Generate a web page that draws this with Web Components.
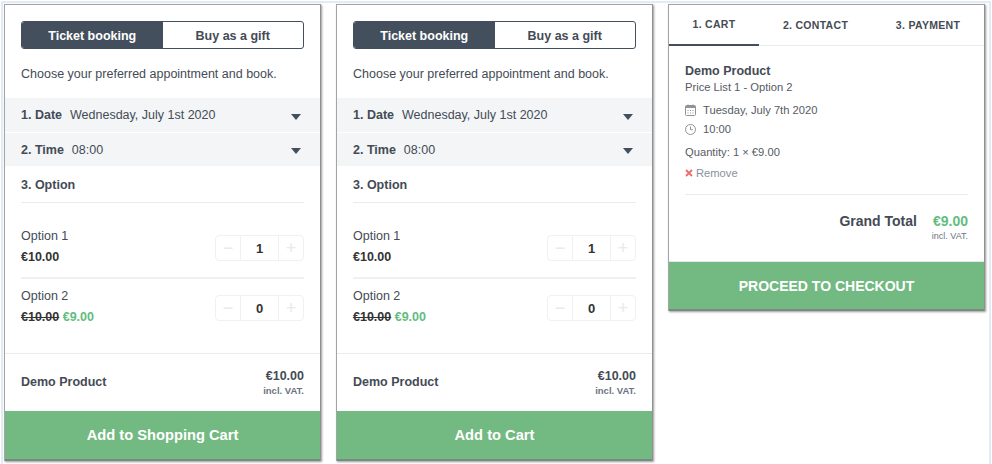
<!DOCTYPE html>
<html>
<head>
<meta charset="utf-8">
<style>
html, body { margin: 0; height: 100%; background: #fff; overflow: hidden; }
body { font-family: "Liberation Sans", Arial, sans-serif; color: #444b55; }
</style>
</head>
<body>
<booking-page>
  <booking-card action="Add to Shopping Cart"></booking-card>
  <booking-card action="Add to Cart"></booking-card>
  <cart-card></cart-card>
</booking-page>

<template id="t-page">
  <style>
    :host { display: flex; align-items: flex-start; gap: 15px; box-sizing: border-box; width: 990px; height: 463px; margin: 1px 1px 0; padding: 1px 0 0 1px; border: 2px solid #e3ecf5; border-bottom: 0; }
  </style>
  <slot></slot>
</template>

<template id="t-booking">
  <style>
    :host { display: block; width: 317px; height: 457px; box-sizing: border-box; background: #fff; border: 1px solid #a4a4a4; border-right: 1px solid #8f8f8f; border-bottom: 0; box-shadow: 1px 1px 2px #999; }
    .wrap { display: flex; flex-direction: column; height: 100%; }
    .tabs { display: flex; margin: 16px 16px 0; height: 28px; box-sizing: border-box; border: 1.5px solid #444f5e; border-radius: 3px; font-size: 12.5px; font-weight: bold; overflow: hidden; }
    .tabs div { flex: 1; display: flex; align-items: center; justify-content: center; padding-top: 1px; }
    .tabs .on { background: #444f5e; color: #fff; }
    .tabs .off { color: #444b55; }
    .intro { margin: 17px 16px 0; font-size: 12.5px; line-height: 16px; height: 32px; }
    step-row + step-row { margin-top: 1px; }
    .third { margin: 0 16px; height: 37px; box-sizing: border-box; border-bottom: 1px solid #e9ebee; padding-top: 11px; font-size: 12.5px; font-weight: bold; line-height: 16px; }
    .opts { flex: 1; margin: 0 16px; padding-top: 23px; }
    .foot { border-top: 1px solid #e9ebee; margin-top: auto; height: 58px; flex: none; box-sizing: border-box; padding: 0 16px; display: flex; align-items: center; justify-content: space-between; }
    .foot b { font-size: 12.5px; margin-top: -1px; }
    .price { text-align: right; font-weight: bold; font-size: 12.5px; line-height: 16px; margin-top: -1px; }
    .price small { display: block; font-size: 9.5px; color: #6c7480; line-height: 13px; }
    .cta { background: #73b982; color: #fff; height: 50px; flex: none; font-weight: bold; font-size: 14.7px; display: flex; align-items: center; justify-content: center; border-bottom: 2px solid #7a8a7e; box-sizing: border-box; }
  </style>
  <div class="wrap">
    <div class="tabs"><div class="on">Ticket booking</div><div class="off">Buy as a gift</div></div>
    <div class="intro">Choose your preferred appointment and book.</div>
    <step-row label="1. Date" value="Wednesday, July 1st 2020"></step-row>
    <step-row label="2. Time" value="08:00" style="height:33px"></step-row>
    <div class="third">3. Option</div>
    <div class="opts">
      <option-row name="Option 1" qty="1"><b>€10.00</b></option-row>
      <option-row name="Option 2" qty="0" last><b><s>€10.00</s> <span style="color:#62bd7e">€9.00</span></b></option-row>
    </div>
    <div class="foot"><b>Demo Product</b><div class="price">€10.00<small>incl. VAT.</small></div></div>
    <div class="cta"></div>
  </div>
</template>

<template id="t-step">
  <style>
    :host { display: flex; align-items: center; height: 34px; box-sizing: border-box; padding: 0 19px 0 16px; background: #f3f5f7; font-size: 12.5px; }
    b { margin-right: 8px; }
    .v { flex: 1; }
    svg { display: block; margin-top: 3px; }
  </style>
  <b></b><span class="v"></span>
  <svg width="10" height="6" viewBox="0 0 10 6"><path d="M0 0h10L5 6z" fill="#444f5e"/></svg>
</template>

<template id="t-option">
  <style>
    :host { display: flex; justify-content: space-between; align-items: flex-start; height: 53px; box-sizing: border-box; font-size: 12.5px; border-bottom: 2px solid #eef0f2; margin-bottom: 7px; }
    :host([last]) { border-bottom: 0; }
    .name { line-height: 20px; }
    .p { line-height: 20px; color: #333; margin-top: 1px; }
    num-stepper { margin-top: 9px; }
    ::slotted(b) { font-weight: bold; }
  </style>
  <div><div class="name"></div><div class="p"><slot></slot></div></div>
  <num-stepper></num-stepper>
</template>

<template id="t-stepper">
  <style>
    :host { display: flex; width: 89px; height: 26px; box-sizing: border-box; border: 1.5px solid #eff1f3; border-radius: 4px; font-size: 13px; font-weight: bold; color: #333; }
    div { display: flex; align-items: center; justify-content: center; }
    .b { width: 24px; color: #e8eaec; font-weight: normal; font-size: 18px; }
    .n { flex: 1; border-left: 1.5px solid #eff1f3; border-right: 1.5px solid #eff1f3; }
  </style>
  <div class="b">−</div><div class="n"></div><div class="b">+</div>
</template>

<template id="t-cart">
  <style>
    :host { display: block; width: 317px; height: 307px; box-sizing: border-box; background: #fff; border: 1px solid #a4a4a4; border-right-color: #8f8f8f; border-bottom: 0; box-shadow: 1px 1px 2px #999; color: #555b63; font-size: 11.2px; }
    .wrap { display: flex; flex-direction: column; height: 100%; }
    .nav { display: flex; height: 40px; flex: none; border-bottom: 1px solid #e9ebee; font-size: 10.5px; font-weight: bold; letter-spacing: .3px; color: #444b55; }
    .nav div { display: flex; align-items: center; justify-content: center; height: 40px; box-sizing: border-box; padding-bottom: 1px; }
    .nav .a { width: 90px; border-bottom: 2px solid #444f5e; height: 41px; }
    .nav .c { width: 113px; }
    .nav .d { width: 112px; }
    .body { flex: 1; padding: 18px 16px 0; }
    h3 { margin: 0; font-size: 12.5px; color: #444b55; line-height: 15px; }
    .sub { line-height: 16px; }
    .ic { display: flex; align-items: center; gap: 7px; line-height: 18px; }
    .ic + .ic { margin-top: 1px; }
    .ic svg { flex: none; }
    .q { margin-top: 5px; line-height: 18px; }
    .rm { margin-top: 3px; line-height: 18px; color: #8a9099; display: flex; align-items: center; gap: 3px; }
    hr { border: 0; border-top: 1px solid #e9ebee; margin: 12px 0 0; }
    .tot { display: flex; justify-content: flex-end; gap: 16px; margin-top: 18px; font-weight: bold; font-size: 14px; line-height: 16px; color: #444b55; }
    .tot span { color: #62bd7e; }
    .vat { text-align: right; font-size: 9px; color: #6c7480; line-height: 13px; margin-top: 1px; }
    .cta { background: #73b982; color: #fff; height: 50px; flex: none; border-top: 1.5px solid #e4e6e8; border-bottom: 2px solid #7a8a7e; box-sizing: border-box; font-weight: bold; font-size: 14px; display: flex; align-items: center; justify-content: center; }
  </style>
  <div class="wrap">
    <div class="nav"><div class="a">1. CART</div><div class="c">2. CONTACT</div><div class="d">3. PAYMENT</div></div>
    <div class="body">
      <h3>Demo Product</h3>
      <div class="sub">Price List 1 - Option 2</div>
      <div class="ic" style="margin-top:6px">
        <svg width="11" height="12" viewBox="0 0 11 12"><rect x=".5" y="1.5" width="10" height="10" rx="1" fill="none" stroke="#8f9499"/><path d="M.5 2h10v2h-10z" fill="#8f9499"/><path d="M3 .5v2M8 .5v2" stroke="#8f9499"/><path d="M2.500 6h1v1h-1zM5 6h1v1H5zM7.500 6h1v1h-1zM2.500 8.500h1v1h-1zM5 8.500h1v1H5zM7.500 8.500h1v1h-1z" fill="#8f9499"/></svg>
        <span>Tuesday, July 7th 2020</span>
      </div>
      <div class="ic">
        <svg width="11" height="11" viewBox="0 0 11 11"><circle cx="5.500" cy="5.500" r="5" fill="none" stroke="#8f9499"/><path d="M5.500 2.500v3.200h2.400" fill="none" stroke="#8f9499"/></svg>
        <span>10:00</span>
      </div>
      <div class="q">Quantity: 1 × €9.00</div>
      <div class="rm"><svg width="8" height="8" viewBox="0 0 8 8"><path d="M1 1l6 6M7 1L1 7" stroke="#ef6a6a" stroke-width="1.800"/></svg>Remove</div>
      <hr>
      <div class="tot">Grand Total <span>€9.00</span></div>
      <div class="vat">incl. VAT.</div>
    </div>
    <div class="cta">PROCEED TO CHECKOUT</div>
  </div>
</template>

<script>
function stamp(el, id) {
  var root = el.attachShadow({ mode: "open" });
  root.appendChild(document.getElementById(id).content.cloneNode(true));
  return root;
}

class BookingPage extends HTMLElement {
  constructor() { super(); stamp(this, "t-page"); }
}

class BookingCard extends HTMLElement {
  constructor() { super(); stamp(this, "t-booking"); }
  connectedCallback() {
    this.shadowRoot.querySelector(".cta").textContent = this.getAttribute("action");
  }
}

class StepRow extends HTMLElement {
  constructor() { super(); stamp(this, "t-step"); }
  connectedCallback() {
    this.shadowRoot.querySelector("b").textContent = this.getAttribute("label");
    this.shadowRoot.querySelector(".v").textContent = this.getAttribute("value");
  }
}

class OptionRow extends HTMLElement {
  constructor() { super(); stamp(this, "t-option"); }
  connectedCallback() {
    this.shadowRoot.querySelector(".name").textContent = this.getAttribute("name");
    this.shadowRoot.querySelector("num-stepper").setAttribute("value", this.getAttribute("qty"));
  }
}

class NumStepper extends HTMLElement {
  static get observedAttributes() { return ["value"]; }
  constructor() { super(); stamp(this, "t-stepper"); }
  attributeChangedCallback(name, old, val) {
    this.shadowRoot.querySelector(".n").textContent = val;
  }
}

class CartCard extends HTMLElement {
  constructor() { super(); stamp(this, "t-cart"); }
}

customElements.define("num-stepper", NumStepper);
customElements.define("option-row", OptionRow);
customElements.define("step-row", StepRow);
customElements.define("booking-card", BookingCard);
customElements.define("cart-card", CartCard);
customElements.define("booking-page", BookingPage);
</script>
</body>
</html>
